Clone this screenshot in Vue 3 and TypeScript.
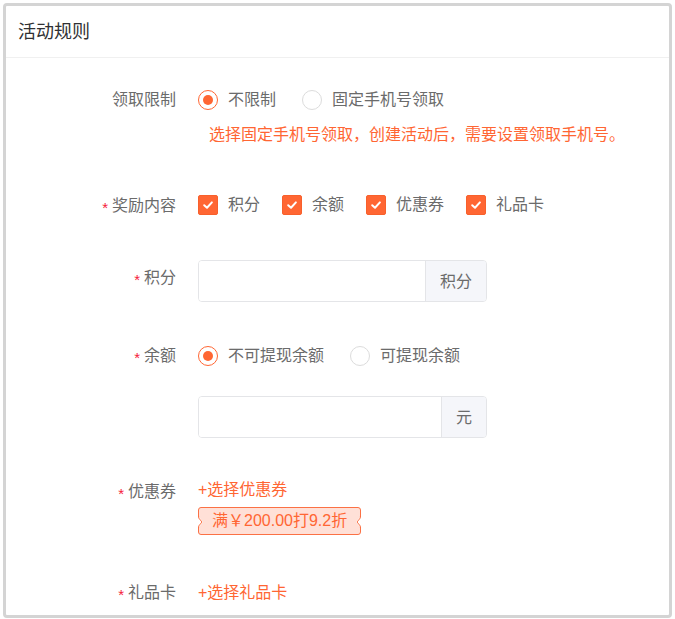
<script setup lang="ts">
import { ref } from 'vue'

interface Option {
  value: string
  label: string
}

const limitOptions: Option[] = [
  { value: 'none', label: '不限制' },
  { value: 'phone', label: '固定手机号领取' },
]
const rewardOptions: Option[] = [
  { value: 'points', label: '积分' },
  { value: 'balance', label: '余额' },
  { value: 'coupon', label: '优惠券' },
  { value: 'gift', label: '礼品卡' },
]
const balanceOptions: Option[] = [
  { value: 'locked', label: '不可提现余额' },
  { value: 'cash', label: '可提现余额' },
]

const limit = ref('none')
const rewards = ref<string[]>(['points', 'balance', 'coupon', 'gift'])
const points = ref('')
const balanceType = ref('locked')
const balance = ref('')
const coupons = ref<string[]>(['满￥200.00打9.2折'])
</script>

<template>
  <main class="panel">
    <header class="panel-header">
      <h1 class="title">活动规则</h1>
    </header>

    <form class="form" @submit.prevent>
      <div class="row" role="radiogroup" aria-labelledby="limit-label">
        <span id="limit-label" class="row-label">领取限制</span>
        <div class="row-content">
          <div class="options radios">
            <label v-for="o in limitOptions" :key="o.value" class="option">
              <input v-model="limit" class="radio" type="radio" name="limit" :value="o.value" />
              <span>{{ o.label }}</span>
            </label>
          </div>
          <p class="hint">选择固定手机号领取，创建活动后，需要设置领取手机号。</p>
        </div>
      </div>

      <div class="row" role="group" aria-labelledby="reward-label">
        <span id="reward-label" class="row-label"><span class="star">*</span>奖励内容</span>
        <div class="row-content">
          <div class="options checks">
            <label v-for="o in rewardOptions" :key="o.value" class="option">
              <span class="check">
                <input v-model="rewards" class="check-input" type="checkbox" :value="o.value" />
                <svg class="check-mark" viewBox="0 0 20 20" aria-hidden="true">
                  <path d="M6.2 10.2 L9 12.7 L13.9 7.4" />
                </svg>
              </span>
              <span>{{ o.label }}</span>
            </label>
          </div>
        </div>
      </div>

      <div class="row">
        <label class="row-label" for="points"><span class="star">*</span>积分</label>
        <div class="row-content">
          <div class="input-group">
            <input id="points" v-model="points" class="field" type="text" />
            <span class="unit">积分</span>
          </div>
        </div>
      </div>

      <div class="row">
        <label class="row-label" for="balance"><span class="star">*</span>余额</label>
        <div class="row-content">
          <div class="options radios" role="radiogroup">
            <label v-for="o in balanceOptions" :key="o.value" class="option">
              <input v-model="balanceType" class="radio" type="radio" name="balance" :value="o.value" />
              <span>{{ o.label }}</span>
            </label>
          </div>
          <div class="input-group stacked">
            <input id="balance" v-model="balance" class="field" type="text" />
            <span class="unit">元</span>
          </div>
        </div>
      </div>

      <div class="row coupon-row">
        <span class="row-label"><span class="star">*</span>优惠券</span>
        <div class="row-content">
          <button class="pick compact" type="button">+选择优惠券</button>
          <div v-for="c in coupons" :key="c" class="coupon">
            <svg class="notch notch-left" viewBox="0 0 6 12" aria-hidden="true">
              <path class="notch-gap" d="M0 1 L1 1 L5 6 L1 11 L0 11 Z" />
              <path class="notch-line" d="M0.7 0.5 L0.7 2 L4 6 L0.7 10 L0.7 11.5" />
            </svg>
            {{ c }}
            <svg class="notch notch-right" viewBox="0 0 6 12" aria-hidden="true">
              <path class="notch-gap" d="M0 1 L1 1 L5 6 L1 11 L0 11 Z" />
              <path class="notch-line" d="M0.7 0.5 L0.7 2 L4 6 L0.7 10 L0.7 11.5" />
            </svg>
          </div>
        </div>
      </div>

      <div class="row">
        <span class="row-label"><span class="star">*</span>礼品卡</span>
        <div class="row-content">
          <button class="pick" type="button">+选择礼品卡</button>
        </div>
      </div>
    </form>
  </main>
</template>

<style>
body {
  background: #fff;
}
</style>

<style scoped>
.panel {
  box-sizing: border-box;
  margin: 3px 3px 1px;
  border: 3px solid #d4d4d4;
  border-radius: 4px;
  background: #fff;
  color: #6b6b6b;
  font-family: 'Liberation Sans', 'Noto Sans CJK SC', sans-serif;
  font-size: 16px;
}

.panel-header {
  padding: 1px 12px 0;
  border-bottom: 1px solid #f0f0f0;
}

.title {
  margin: 0;
  color: #303133;
  font-size: 18px;
  font-weight: 400;
  line-height: 50px;
}

.form {
  display: flex;
  flex-direction: column;
  gap: 36px;
  padding: 24px 12px 4px 0;
}

.row {
  display: grid;
  grid-template-columns: 170px minmax(0, 1fr);
  column-gap: 22px;
  align-items: start;
}

.row-label {
  display: flex;
  justify-content: flex-end;
  line-height: 36px;
}

.star {
  height: 32px;
  padding-top: 2px;
  margin-right: 4px;
  color: #f5203a;
  font-size: 15px;
}

.options {
  display: flex;
  flex-wrap: wrap;
  line-height: 36px;
}

.radios {
  column-gap: 26px;
}

.checks {
  column-gap: 22px;
  line-height: 34px;
}

.option {
  display: flex;
  align-items: center;
  gap: 10px;
  cursor: pointer;
}

.radio {
  appearance: none;
  display: grid;
  place-items: center;
  box-sizing: border-box;
  width: 20px;
  height: 20px;
  margin: 0;
  border: 1px solid #dcdcdc;
  border-radius: 50%;
  background: #fff;
}

.radio:checked {
  border-color: #ff6633;
}

.radio:checked::before {
  content: '';
  width: 10px;
  height: 10px;
  border-radius: 50%;
  background: #ff6633;
}

.check {
  display: grid;
  width: 20px;
  height: 20px;
}

.check-input,
.check-mark {
  grid-area: 1 / 1;
  width: 20px;
  height: 20px;
}

.check-input {
  appearance: none;
  box-sizing: border-box;
  margin: 0;
  border: 1px solid #dcdcdc;
  border-radius: 2px;
  background: #fff;
}

.check-input:checked {
  border-color: #f8602c;
  background: #ff6633;
}

.check-mark {
  fill: none;
  stroke: #fff;
  stroke-width: 2;
  stroke-linecap: round;
  stroke-linejoin: round;
  pointer-events: none;
}

.hint {
  margin: 0;
  padding-left: 11px;
  color: #ff6633;
  line-height: 34px;
}

.input-group {
  display: flex;
  box-sizing: border-box;
  max-width: 289px;
  height: 42px;
  overflow: hidden;
  border: 1px solid #e4e5e8;
  border-radius: 4px;
}

.stacked {
  margin-top: 22px;
}

.field {
  flex: 1;
  min-width: 0;
  padding: 0 14px;
  border: 0;
  outline: 0;
  background: #fff;
  color: inherit;
  font: inherit;
}

.unit {
  padding: 0 14px;
  border-left: 1px solid #e4e5e8;
  background: #f5f6fa;
  line-height: 42px;
}

.coupon-row {
  min-height: 65px;
}

.pick {
  display: block;
  padding: 0;
  border: 0;
  background: none;
  color: #ff6633;
  font: inherit;
  line-height: 36px;
  cursor: pointer;
}

.compact {
  line-height: 32px;
}

.coupon {
  position: relative;
  box-sizing: border-box;
  width: fit-content;
  margin-top: 1px;
  padding: 0 13px;
  border: 1px solid #fb7145;
  border-radius: 3px;
  background: #ffe0d7;
  color: #ff6633;
  line-height: 26px;
}

.notch {
  position: absolute;
  top: 8px;
  width: 6px;
  height: 12px;
}

.notch-left {
  left: -1px;
}

.notch-right {
  right: -1px;
  transform: scaleX(-1);
}

.notch-gap {
  fill: #fff;
}

.notch-line {
  fill: none;
  stroke: #fb7145;
  stroke-width: 1;
}
</style>
